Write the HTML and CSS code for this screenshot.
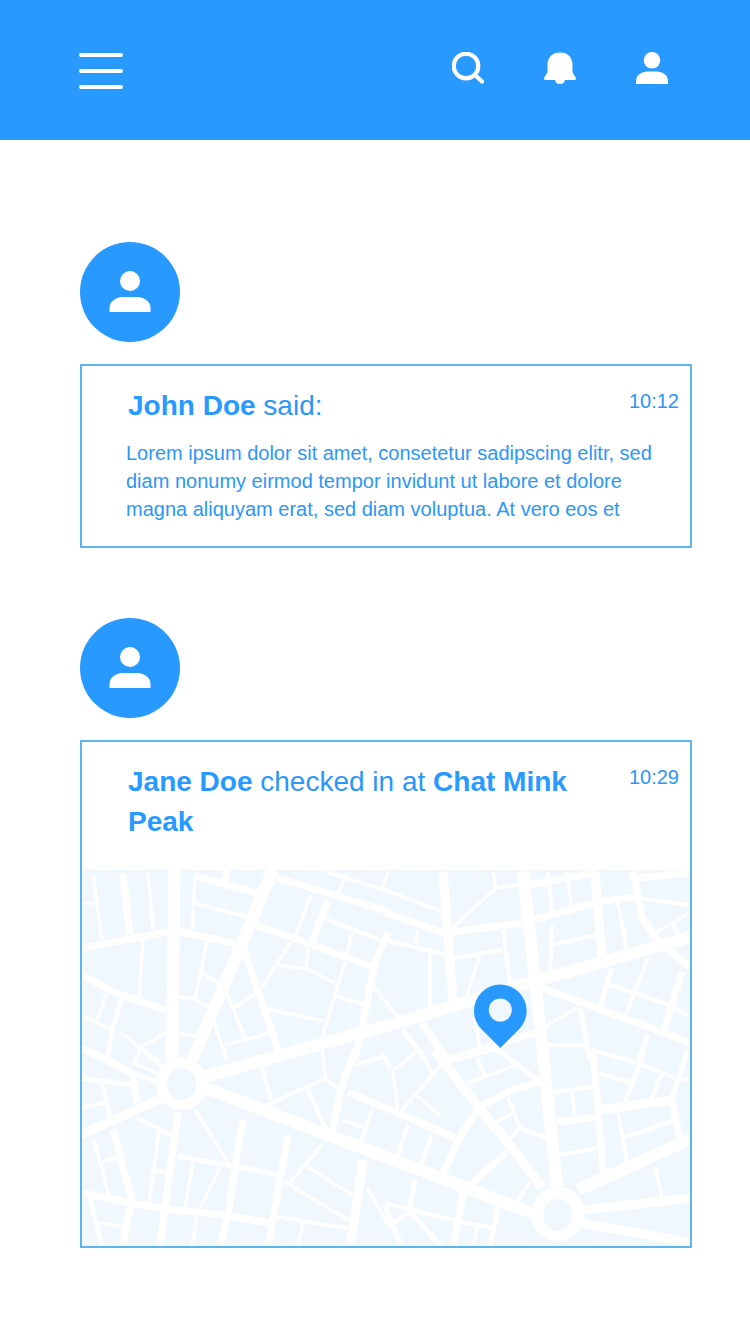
FILE: index.html
```html
<!DOCTYPE html>
<html lang="en">
<head>
<meta charset="utf-8">
<title>Activity feed</title>
<link rel="stylesheet" href="styles.css">
</head>
<body>
<header class="topbar">
  <button class="menu" aria-label="Menu"><span></span><span></span><span></span></button>
  <nav class="actions">
    <svg class="icon" viewBox="0 0 32 32"><circle cx="14" cy="14" r="12.300" fill="none" stroke="#fff" stroke-width="4.200"/><path d="M23.500 23.500l6.500 6" fill="none" stroke="#fff" stroke-width="4.200" stroke-linecap="round"/></svg>
    <svg class="icon" viewBox="0 0 32 32"><path d="M3.500 13C3.500 5 8.500 .5 16 .5S28.500 5 28.500 13v6c0 2 1.500 4 3 6 .8 1.500.3 3-1 3H1.500c-1.300 0-1.800-1.500-1-3 1.500-2 3-4 3-6z"/><path d="M11 27h10c0 3-2 5-5 5s-5-2-5-5z"/></svg>
    <svg class="icon" viewBox="0 0 32 32"><circle cx="16" cy="8.300" r="8.300"/><path d="M0 32v-3c0-6 6-9.500 11-9.500h10c5 0 11 3.500 11 9.500v3z"/></svg>
  </nav>
</header>
<main class="feed">
  <article class="entry">
    <div class="avatar"><svg viewBox="0 0 42 42"><circle cx="21" cy="10" r="10"/><path d="M0.500 41v-4c0-7 7-11 13-11h15c6 0 13 4 13 11v4z"/></svg></div>
    <div class="card">
      <div class="card-head">
        <h2 class="title"><b>John Doe</b> said:</h2>
        <time class="time">10:12</time>
      </div>
      <p class="body">Lorem ipsum dolor sit amet, consetetur sadipscing elitr, sed diam nonumy eirmod tempor invidunt ut labore et dolore magna aliquyam erat, sed diam voluptua. At vero eos et</p>
    </div>
  </article>
  <article class="entry">
    <div class="avatar"><svg viewBox="0 0 42 42"><circle cx="21" cy="10" r="10"/><path d="M0.500 41v-4c0-7 7-11 13-11h15c6 0 13 4 13 11v4z"/></svg></div>
    <div class="card">
      <div class="card-head card-head-map">
        <h2 class="title"><b>Jane Doe</b> checked in at <b>Chat Mink Peak</b></h2>
        <time class="time">10:29</time>
      </div>
      <svg class="map" viewBox="82 870 608 376" aria-label="Map">
        <rect class="map-bg" x="82" y="870" width="608" height="376"/>
        <g class="roads r3">
          <polyline points="83,903 94,903"/><polyline points="93,875 102,940"/><polyline points="148,873 153,930"/><polyline points="195,877 192,930"/>
          <polyline points="195,903 247,917"/><polyline points="311,895 295,936"/><polyline points="326,919 380,940"/><polyline points="352,933 347,954"/>
          <polyline points="327,872 390,892"/><polyline points="347,873 337,895"/><polyline points="388,872 382,888"/>
          <polyline points="372,985 398,1017"/><polyline points="290,943 262,988"/><polyline points="278,965 307,969 335,983"/><polyline points="308,948 306,968"/>
          <polyline points="345,962 322,1037"/><polyline points="335,996 363,1004"/><polyline points="268,1009 323,1021"/>
          <polyline points="143,940 139,997"/><polyline points="207,942 195,998"/><polyline points="178,997 195,999 208,1007"/><polyline points="202,973 218,983"/>
          <polyline points="178,1033 195,1036"/><polyline points="226,992 246,1040"/><polyline points="233,1008 256,994"/><polyline points="213,1020 227,1060"/><polyline points="225,1045 270,1033"/>
          <polyline points="107,992 97,1020"/><polyline points="83,1016 112,1030"/><polyline points="120,1032 140,1048 166,1032"/><polyline points="140,1048 160,1062"/>
          <polyline points="142,1050 162,1067"/><polyline points="133,1063 157,1073"/><polyline points="133,1073 160,1083"/>
          <polyline points="94,1140 109,1195"/><polyline points="102,1162 116,1158"/><polyline points="159,1131 149,1202"/><polyline points="154,1170 168,1173"/>
          <polyline points="195,1110 228,1162"/><polyline points="193,1163 185,1207"/><polyline points="220,1168 200,1208"/><polyline points="95,1222 125,1227"/>
          <polyline points="277,1217 347,1228"/><polyline points="303,1223 298,1247"/><polyline points="285,1182 348,1220"/><polyline points="308,1167 352,1195"/><polyline points="322,1145 290,1183"/>
          <polyline points="367,1188 390,1227"/><polyline points="342,1120 363,1127"/><polyline points="325,1078 342,1092"/><polyline points="322,1050 326,1078"/>
          <polyline points="392,1072 418,1050"/><polyline points="393,1072 398,1113"/><polyline points="420,1050 432,1073"/><polyline points="398,1115 443,1062"/><polyline points="417,1096 440,1115"/>
          <polyline points="468,1083 517,1065"/><polyline points="477,1057 485,1077"/><polyline points="508,1098 520,1128 508,1142"/><polyline points="492,1125 513,1113"/><polyline points="530,1182 518,1200"/>
          <polyline points="572,1092 575,1115"/><polyline points="655,1167 662,1197"/><polyline points="680,1078 692,1081"/><polyline points="477,1227 473,1247"/>
          <polyline points="493,872 496,888 452,928"/><polyline points="496,888 518,885"/><polyline points="567,872 572,910"/><polyline points="653,935 690,912"/>
          <polyline points="480,955 465,1000"/><polyline points="430,953 430,1007"/><polyline points="418,930 415,943"/><polyline points="475,1017 480,1050"/><polyline points="545,1027 578,1007"/>
        </g>
        <g class="roads r4">
          <polyline points="137,1118 175,1137"/><polyline points="102,1083 110,1117"/><polyline points="82,1108 106,1102"/><polyline points="140,1050 133,1065"/>
          <polyline points="197,1215 192,1247"/><polyline points="372,1110 360,1145"/><polyline points="325,1078 258,1110"/><polyline points="307,1088 328,1133"/><polyline points="262,1068 271,1100"/>
          <polyline points="355,1065 383,1057"/><polyline points="382,1053 390,1067"/><polyline points="408,1125 397,1157"/><polyline points="432,1135 420,1167"/>
          <polyline points="553,1092 593,1087"/><polyline points="560,1155 598,1148"/><polyline points="618,1112 628,1167"/><polyline points="624,1138 675,1120"/>
          <polyline points="592,1050 637,1063 675,1078"/><polyline points="595,1072 630,1082"/><polyline points="645,1050 625,1102"/><polyline points="662,1073 652,1098"/>
          <polyline points="385,1203 410,1210 455,1220"/><polyline points="460,1222 495,1228"/><polyline points="385,890 443,912"/><polyline points="638,898 690,905"/>
          <polyline points="548,872 552,915"/><polyline points="618,903 628,955"/><polyline points="673,925 683,945"/><polyline points="552,945 597,935"/><polyline points="552,925 550,977"/>
          <polyline points="503,930 510,983"/><polyline points="453,958 503,950"/><polyline points="385,940 447,955"/><polyline points="548,1045 585,1045"/>
          <polyline points="610,985 670,1005"/><polyline points="648,958 625,1017"/><polyline points="675,1008 690,1017"/><polyline points="648,1035 638,1060"/>
          <polyline points="520,1128 547,1138"/><polyline points="410,1212 393,1223"/>
        </g>
        <g class="roads r5">
          <polyline points="80,1078 132,1085"/><polyline points="90,1197 102,1247"/><polyline points="403,1030 425,1060"/><polyline points="498,1050 538,1080"/>
          <polyline points="672,1098 688,1050"/><polyline points="410,1207 415,1180"/><polyline points="410,1212 442,1247"/><polyline points="385,1207 402,1247"/><polyline points="498,1207 490,1247"/>
          <polyline points="612,968 600,1007"/><polyline points="580,1008 590,1060"/><polyline points="177,1156 237,1167 280,1175"/><polyline points="122,998 112,1030 108,1057"/>
        </g>
        <g class="roads r7">
          <polyline points="123,873 130,935"/><polyline points="195,876 257,893"/><polyline points="226,870 226,881"/><polyline points="277,878 390,912"/>
          <polyline points="255,925 293,938 373,967"/><polyline points="82,948 168,932 180,932 243,945"/><polyline points="243,947 278,1050"/><polyline points="328,901 312,942"/>
          <polyline points="388,932 375,963 355,1060"/><polyline points="82,975 113,992 166,1010"/><polyline points="82,1048 132,1073"/><polyline points="132,1072 137,1103"/>
          <polyline points="113,1130 132,1200"/><polyline points="178,1113 165,1207 160,1247"/><polyline points="243,1120 235,1167 228,1215 220,1247"/><polyline points="288,1135 280,1180 268,1247"/>
          <polyline points="130,1207 123,1247"/><polyline points="83,1193 130,1203 167,1209 223,1215 270,1223"/><polyline points="355,1050 340,1093 332,1133"/><polyline points="348,1092 390,1110"/>
          <polyline points="385,1107 455,1138"/><polyline points="443,1173 462,1133 480,1107 512,1090 540,1082"/><polyline points="470,1185 507,1152"/><polyline points="557,1122 595,1117"/>
          <polyline points="593,1050 598,1110 604,1180"/><polyline points="672,1100 680,1140"/><polyline points="463,1193 453,1247"/><polyline points="385,913 445,933"/>
          <polyline points="633,872 642,917 655,937 690,968"/><polyline points="637,878 690,873"/><polyline points="528,885 595,873"/><polyline points="452,932 522,923"/><polyline points="532,920 598,902 635,897"/>
          <polyline points="422,1023 447,1060"/><polyline points="448,1060 535,1033"/><polyline points="682,972 663,1033"/><polyline points="542,988 662,1032 690,1043"/><polyline points="448,1060 498,1047"/>
        </g>
        <g class="roads r9">
          <polyline points="163,1098 80,1135"/><polyline points="363,1160 350,1247"/><polyline points="598,1110 672,1100"/><polyline points="583,1210 692,1198"/><polyline points="582,1223 692,1243"/>
          <polyline points="435,1050 478,1107 508,1143 542,1187"/><polyline points="443,872 453,1000"/><polyline points="595,872 602,960"/>
        </g>
        <g class="roads r11">
          <polyline points="174.500,870 172,1060"/><polyline points="273,870 192,1060"/><polyline points="203,1077 390,1025 528,983 690,937"/>
          <polyline points="203,1087 532,1213"/><polyline points="523,872 535,980 557,1187"/><polyline points="578,1190 695,1137"/>
        </g>
        <circle class="hub" cx="181.500" cy="1084" r="26"/>
        <circle class="hub" cx="558" cy="1214" r="27"/>
        <ellipse class="map-bg" cx="181.500" cy="1084" rx="14.500" ry="16"/>
        <ellipse class="map-bg" cx="558" cy="1215" rx="14.500" ry="16"/>
        <path class="pin" d="M500.300 1048l-18.500-18.500a26.300 26.300 0 1 1 37 0z"/>
        <circle class="map-bg" cx="500.300" cy="1010" r="11.500"/>
      </svg>
    </div>
  </article>
</main>
</body>
</html>
```

FILE: styles.css
```css
* { box-sizing: border-box; }
html, body { margin: 0; padding: 0; background: #fff; }
body { font-family: "Liberation Sans", Arial, sans-serif; color: #2899ff; }

.topbar {
  height: 140px;
  background: #2899ff;
  display: flex;
  align-items: center;
  justify-content: space-between;
  padding: 0 82px 4px 79px;
}
.menu {
  width: 44px;
  margin-top: 6px;
  display: flex;
  flex-direction: column;
  gap: 12.5px;
  padding: 0;
  border: 0;
  background: none;
}
.menu span { display: block; height: 3.500px; border-radius: 2px; background: #fff; }
.actions { display: flex; gap: 60px; }
.icon { display: block; width: 32px; height: 32px; fill: #fff; }

.feed { width: 612px; margin-left: 80px; padding-top: 102px; display: flex; flex-direction: column; gap: 70px; }
.entry { display: flex; flex-direction: column; gap: 22px; }
.avatar {
  width: 100px;
  height: 100px;
  border-radius: 50%;
  background: #2899ff;
  display: flex;
  align-items: center;
  justify-content: center;
}
.avatar svg { display: block; width: 42px; height: 42px; fill: #fff; }

.card { border: 2px solid #5cb5ee; background: #fff; }
.card-head { display: flex; justify-content: space-between; align-items: flex-start; padding: 20px 11px 0 46px; }
.card-head-map { padding-bottom: 28px; }
.title { margin: 0; width: 460px; font-size: 28px; line-height: 40px; font-weight: 400; color: #2b97f8; }
.title b { font-weight: 700; color: #2899ff; }
.time { margin-top: 3px; font-size: 20px; line-height: 24px; color: #2b97f8; }
.body { margin: 13px 0 0; padding: 0 30px 23px 44px; font-size: 20px; line-height: 28px; color: #2b97f8; }

.map { display: block; width: 608px; height: 376px; }
.map-bg { fill: #f0f8fe; }
.hub { fill: #fff; }
.pin { fill: #2899ff; }
.roads polyline { fill: none; stroke: #fff; stroke-linejoin: round; }
.r3 polyline { stroke-width: 3.5px; }
.r4 polyline { stroke-width: 4px; }
.r5 polyline { stroke-width: 5px; }
.r7 polyline { stroke-width: 7px; }
.r9 polyline { stroke-width: 9px; }
.r11 polyline { stroke-width: 12px; }
```
